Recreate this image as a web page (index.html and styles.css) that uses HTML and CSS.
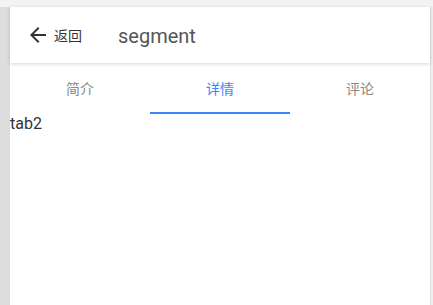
FILE: index.html
```html
<!DOCTYPE html>
<html lang="en">
<head>
  <meta charset="UTF-8">
  <meta name="viewport" content="width=device-width, initial-scale=1.0">
  <title>segment</title>
  <link rel="stylesheet" href="styles.css">
</head>
<body>

  <div class="frame">
    <div class="rail"></div>

    <div class="app">
      <!-- Header -->
      <div class="header">
        <a class="back" href="#">
          <svg class="back-icon" viewBox="0 0 24 24" width="24" height="24">
            <path d="M20 11H7.83l5.59-5.59L12 4l-8 8 8 8 1.41-1.41L7.83 13H20v-2z"></path>
          </svg>
          <span>返回</span>
        </a>
        <h1 class="title">segment</h1>
      </div>

      <!-- Segment tabs -->
      <div class="tabs">
        <button class="tab">简介</button>
        <button class="tab active">详情</button>
        <button class="tab">评论</button>
      </div>

      <div class="content">tab2</div>
    </div>
  </div>

</body>
</html>
```

FILE: styles.css
```css
body {
  margin: 0;
  background-color: #f3f3f3;
  font-family: Roboto, "Noto Sans CJK SC", sans-serif;
}
.frame {
  display: flex;
  margin-top: 7px;
  height: 298px;
  background-color: #efefef;
}
.rail {
  width: 10px;
  background-color: #dddddd;
}
.app {
  width: 420px;
  background-color: white;
  border-right: 1px solid #e0e0e0;
}
.header {
  display: flex;
  align-items: center;
  height: 56px;
  padding-left: 16px;
  box-shadow: 0 1px 4px rgba(0, 0, 0, 0.16);
  position: relative;
}
.back {
  display: flex;
  align-items: center;
  color: #333;
  text-decoration: none;
  font-size: 14px;
}
.back-icon {
  fill: #333;
  margin-right: 4px;
}
.title {
  margin: 2px 0 0 36px;
  font-size: 20px;
  font-weight: normal;
  color: #555;
}
.tabs {
  display: flex;
  height: 51px;
}
.tab {
  flex: 1;
  border: none;
  background: none;
  font-family: inherit;
  font-size: 14px;
  color: #888;
  padding: 0;
  border-bottom: 2px solid transparent;
}
.tab.active {
  color: #3a86f7;
  border-bottom-color: #3a86f7;
}
.content {
  font-size: 16px;
  color: #333;
  line-height: 20px;
}
```
